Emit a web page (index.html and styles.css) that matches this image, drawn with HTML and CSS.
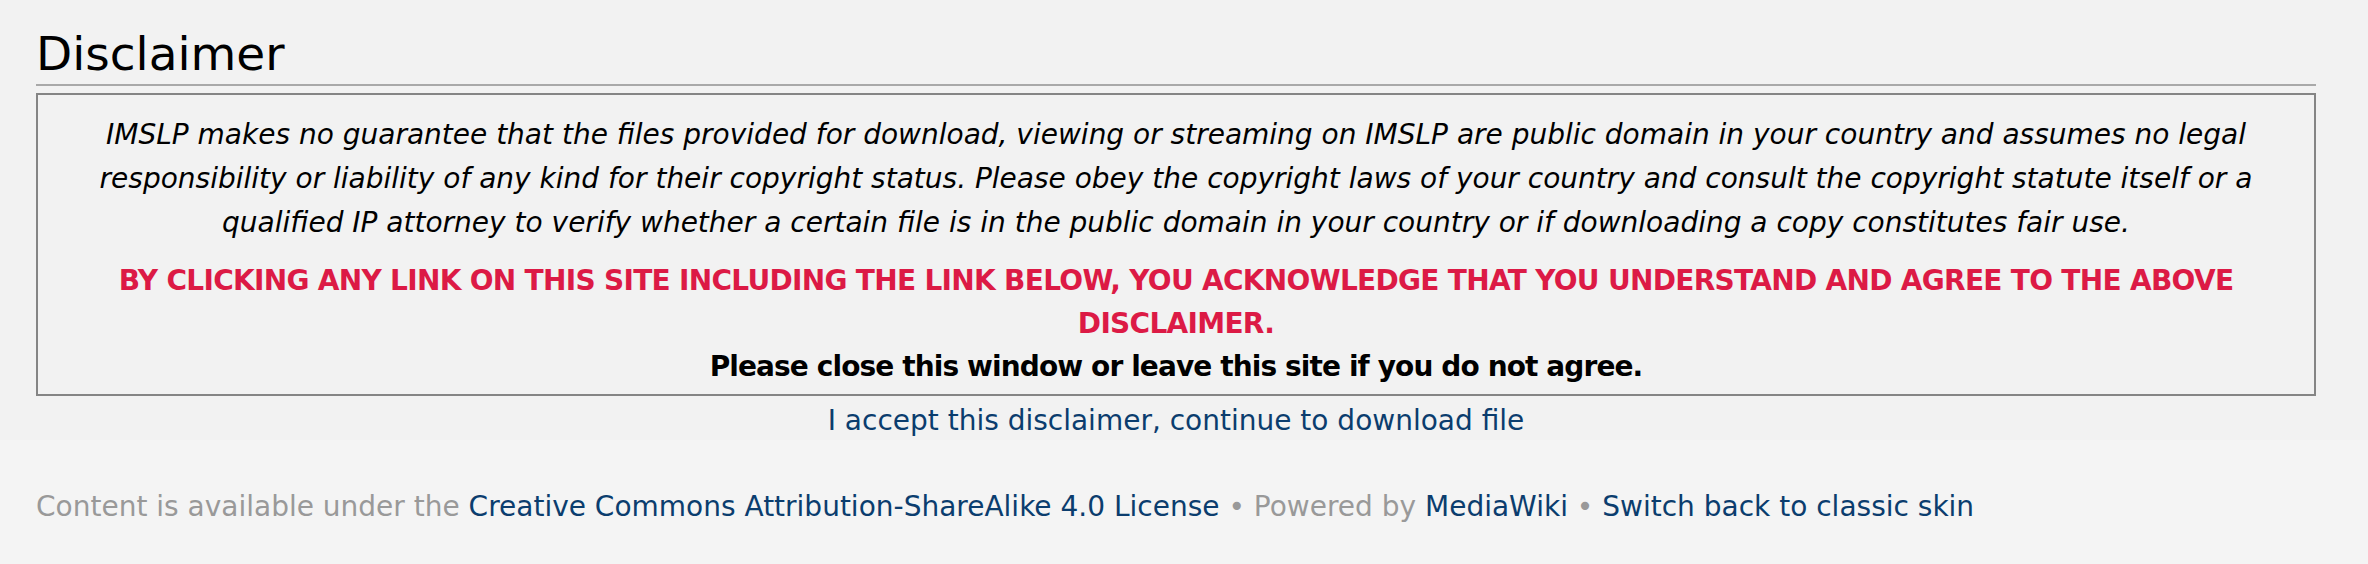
FILE: index.html
```html
<!DOCTYPE html>
<html lang="en">
<head>
<meta charset="utf-8">
<title>Disclaimer</title>
<link rel="stylesheet" href="styles.css">
</head>
<body>
<div class="content">
  <h1 class="title">Disclaimer</h1>
  <div class="notice">
    <p class="notice-text">IMSLP makes no guarantee that the files provided for download, viewing or streaming on IMSLP are public domain in your country and assumes no legal responsibility or liability of any kind for their copyright status. Please obey the copyright laws of your country and consult the copyright statute itself or a qualified IP attorney to verify whether a certain file is in the public domain in your country or if downloading a copy constitutes fair use.</p>
    <p class="notice-warn">BY CLICKING ANY LINK ON THIS SITE INCLUDING THE LINK BELOW, YOU ACKNOWLEDGE THAT YOU UNDERSTAND AND AGREE TO THE ABOVE DISCLAIMER.</p>
    <p class="notice-close">Please close this window or leave this site if you do not agree.</p>
  </div>
  <div class="accept"><a href="#" class="link">I accept this disclaimer, continue to download file</a></div>
</div>
<div class="footer">
  <span class="muted">Content is available under the </span><a href="#" class="link">Creative Commons Attribution-ShareAlike 4.0 License</a><span class="sep"> • </span><span class="muted">Powered by </span><a href="#" class="link">MediaWiki</a><span class="sep"> • </span><a href="#" class="link">Switch back to classic skin</a>
</div>
</body>
</html>
```

FILE: styles.css
```css
html, body {
  margin: 0;
  padding: 0;
}
body {
  background: #f4f4f4;
  font-family: "DejaVu Sans", "Liberation Sans", sans-serif;
  font-size: 28px;
  color: #000;
}
.content {
  background: #f2f2f2;
  padding: 23px 52px 0 36px;
  height: 417px;
}
.title {
  margin: 0;
  font-size: 47px;
  font-weight: normal;
  line-height: 61px;
  padding-bottom: 0;
  border-bottom: 2px solid #a9a9a9;
}
.notice {
  margin-top: 7px;
  border: 2px solid #858585;
  padding: 18px 12px 5px;
  text-align: center;
}
.notice p {
  margin: 0;
  line-height: 44px;
}
.notice-text {
  font-style: italic;
}
.notice-warn {
  margin-top: 14px !important;
  font-weight: bold;
  letter-spacing: -0.7px;
  color: #dc1a45;
  line-height: 43px !important;
}
.notice-close {
  font-weight: bold;
  letter-spacing: -0.9px;
}
.accept {
  text-align: center;
  line-height: 42px;
  padding-top: 4px;
}
.link {
  color: #0b3d6e;
  text-decoration: none;
}
.footer {
  padding: 45px 36px 0;
  line-height: 44px;
  color: #999;
}
.sep {
  color: #999;
}
```
